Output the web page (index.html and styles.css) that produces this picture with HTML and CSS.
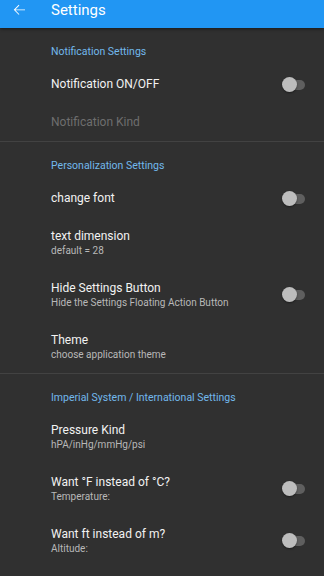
FILE: index.html
```html
<!DOCTYPE html>
<html lang="en">

<head>
    <meta charset="UTF-8">
    <meta name="viewport" content="width=device-width, initial-scale=1.0">
    <title>Settings</title>
    <link rel="stylesheet" href="styles.css">
</head>

<body>
    <header class="appbar">
        <svg class="back" width="18" height="18" viewBox="0 0 24 24">
            <path d="M20 11.2H7.3l5.2-5.2-0.85-0.85L5 11.8l6.65 6.65 0.85-0.85-5.2-5.2H20z" fill="#fff" />
        </svg>
        <h1>Settings</h1>
    </header>

    <section class="group">
        <div class="group-title">Notification Settings</div>
        <div class="row">
            <div class="text">
                <div class="title">Notification ON/OFF</div>
            </div>
            <div class="switch"></div>
        </div>
        <div class="row disabled">
            <div class="text">
                <div class="title">Notification Kind</div>
            </div>
        </div>
    </section>

    <section class="group">
        <div class="group-title">Personalization Settings</div>
        <div class="row">
            <div class="text">
                <div class="title">change font</div>
            </div>
            <div class="switch"></div>
        </div>
        <div class="row two">
            <div class="text">
                <div class="title">text dimension</div>
                <div class="summary">default = 28</div>
            </div>
        </div>
        <div class="row two">
            <div class="text">
                <div class="title">Hide Settings Button</div>
                <div class="summary">Hide the Settings Floating Action Button</div>
            </div>
            <div class="switch"></div>
        </div>
        <div class="row two">
            <div class="text">
                <div class="title">Theme</div>
                <div class="summary">choose application theme</div>
            </div>
        </div>
    </section>

    <section class="group">
        <div class="group-title">Imperial System / International Settings</div>
        <div class="row two">
            <div class="text">
                <div class="title">Pressure Kind</div>
                <div class="summary">hPA/inHg/mmHg/psi</div>
            </div>
        </div>
        <div class="row two">
            <div class="text">
                <div class="title">Want °F instead of °C?</div>
                <div class="summary">Temperature:</div>
            </div>
            <div class="switch"></div>
        </div>
        <div class="row two">
            <div class="text">
                <div class="title">Want ft instead of m?</div>
                <div class="summary">Altitude:</div>
            </div>
            <div class="switch"></div>
        </div>
    </section>
</body>

</html>
```

FILE: styles.css
```css
* {
    box-sizing: border-box;
}

html,
body {
    margin: 0;
    height: 100%;
}

body {
    background-color: #303030;
    font-family: Roboto, "Noto Sans", sans-serif;
    color: #f2f2f2;
    overflow: hidden;
}

.appbar {
    height: 28px;
    background-color: #2196f3;
    display: flex;
    align-items: center;
    padding: 0 0 9px 10px;
    box-shadow: 0 1px 3px rgba(0, 0, 0, 0.5);
}

.back {
    flex-shrink: 0;
}

.appbar h1 {
    margin: 0 0 0 23px;
    font-size: 15px;
    font-weight: 400;
    color: #fff;
}

.group {
    border-bottom: 1px solid #424242;
}

.group:last-child {
    border-bottom: none;
}

.group-title {
    height: 37px;
    padding: 18px 0 0 51px;
    font-size: 10.5px;
    color: #72b8ec;
    line-height: 12px;
}

.row {
    height: 38px;
    display: flex;
    align-items: center;
    padding: 1px 19px 0 51px;
}

.row.two {
    height: 52px;
    padding-bottom: 2px;
}

.text {
    flex: 1;
}

.title {
    font-size: 12px;
    line-height: 15px;
}

.summary {
    font-size: 10px;
    line-height: 13px;
    color: #b8b8b8;
}

.disabled .title {
    color: #6e6e6e;
}

.switch {
    position: relative;
    width: 22px;
    height: 10px;
    border-radius: 5px;
    background-color: #5f5f5f;
}

.switch::before {
    content: "";
    position: absolute;
    left: -1px;
    top: -3px;
    width: 15px;
    height: 15px;
    border-radius: 50%;
    background-color: #bdbdbd;
    box-shadow: 0 1px 2px rgba(0, 0, 0, 0.4);
}
```
